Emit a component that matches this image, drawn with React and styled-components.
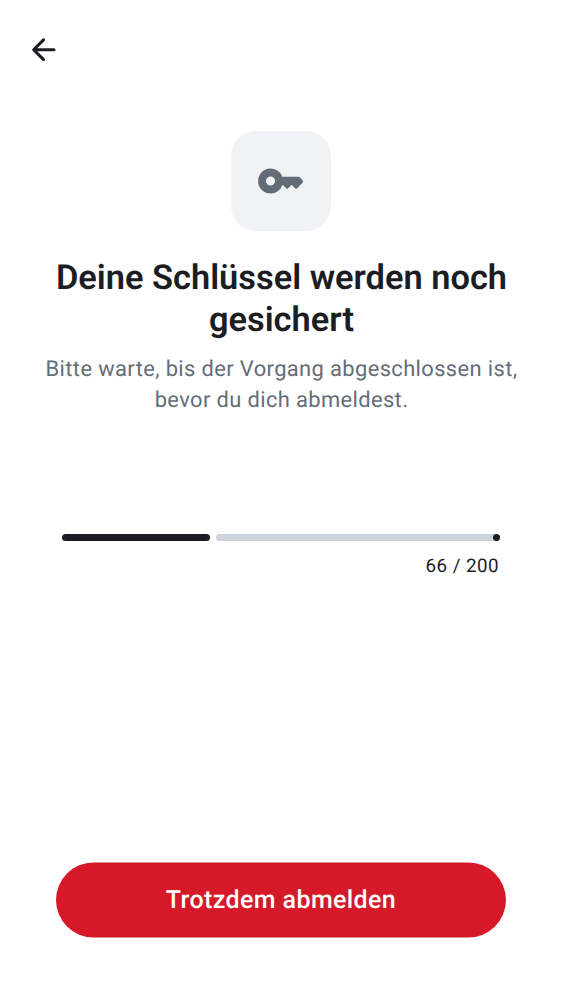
import React from "react";
import styled, { createGlobalStyle } from "styled-components";

const GlobalStyle = createGlobalStyle`
  *, *::before, *::after { box-sizing: border-box; }
  body { margin: 0; background: #fff; font-family: Roboto, sans-serif; color: #1b1d22; text-rendering: geometricPrecision; }
`;
const Screen = styled.div`
  display: flex;
  flex-direction: column;
  width: 562px;
  height: 1000px;
  background: #fff;
`;
const TopBar = styled.header`
  height: 100px;
  display: flex;
  align-items: center;
  padding-left: 25px;
`;
const BackButton = styled.button`
  display: flex;
  border: 0;
  padding: 0;
  background: none;
  color: #1b1d22;
`;
const Header = styled.section`
  display: flex;
  flex-direction: column;
  align-items: center;
  padding-top: 31px;
  text-align: center;
`;
const IconTile = styled.div`
  width: 100px;
  height: 100px;
  border-radius: 25px;
  background: #f0f2f5;
  color: #636b77;
  display: flex;
  align-items: center;
  justify-content: center;
`;
const Title = styled.h1`
  margin: 26px 0 0;
  padding-left: 1px;
  font-size: 34.4px;
  line-height: 42.2px;
  font-weight: 600;
  white-space: nowrap;
`;
const Subtitle = styled.p`
  margin: 12.6px 0 0;
  padding-left: 1px;
  font-size: 21.9px;
  line-height: 31px;
  letter-spacing: 0.38px;
  color: #656d77;
  white-space: nowrap;
`;
const Progress = styled.section`
  padding: 0 62px;
  margin-top: 118px;
`;
const Bar = styled.div`
  display: flex;
  gap: 6px;
  height: 7px;
`;
const Filled = styled.div`
  width: 148px;
  border-radius: 3.5px;
  background: #1b1d22;
`;
const Track = styled.div`
  flex: 1;
  display: flex;
  justify-content: flex-end;
  border-radius: 3.5px;
  background: #cdd3da;
`;
const Stop = styled.span`
  width: 7px;
  height: 7px;
  border-radius: 50%;
  background: #1b1d22;
`;
const Count = styled.div`
  margin-top: 13px;
  padding-right: 1px;
  font-size: 18.75px;
  line-height: 25px;
  letter-spacing: 0.47px;
  text-align: right;
`;
const Footer = styled.footer`
  margin-top: auto;
  padding: 0 56px 63px;
`;
const DangerButton = styled.button`
  display: block;
  width: 100%;
  height: 75px;
  border: 0;
  border-radius: 38px;
  background: #d51928;
  color: #fff;
  font: 500 25px/37px Roboto, sans-serif;
  letter-spacing: 0.39px;
  text-rendering: inherit;
  transform: translateY(0.5px);
`;

export default function App() {
  return (
    <Screen>
      <GlobalStyle />
      <TopBar>
        <BackButton aria-label="Zurück">
          <svg width="36" height="36" viewBox="-0.35 0.2 24 24" fill="currentColor">
            <path d="m7.825 13 4.9 4.9q.3.3.287.7-.012.4-.312.7-.3.275-.7.287-.4.013-.7-.287l-6.6-6.6a.9.9 0 0 1-.213-.325A1.1 1.1 0 0 1 4.425 12q0-.2.062-.375a.9.9 0 0 1 .213-.325l6.6-6.6a.93.93 0 0 1 .688-.275q.412 0 .712.275.3.3.3.713 0 .412-.3.712L7.825 11H19q.424 0 .713.287.287.288.287.713 0 .424-.287.713A.97.97 0 0 1 19 13z" />
          </svg>
        </BackButton>
      </TopBar>
      <Header>
        <IconTile>
          <svg width="50" height="50" viewBox="0 0 24 24" fill="currentColor">
            <path fillRule="evenodd" d="M7 18a6 6 0 1 1 5.65-8h7.75q.42 0 .7.29l1.2 1.2q.7.7 0 1.4l-2.5 2.55q-.55.55-1.1 0L17.1 13.8l-1.65 1.64q-.5.5-1 0L12.9 13.9 12.65 14A6 6 0 0 1 7 18m0-3.8a2.2 2.2 0 1 0 0-4.4 2.2 2.2 0 0 0 0 4.4" />
          </svg>
        </IconTile>
        <Title>Deine Schlüssel werden noch<br />gesichert</Title>
        <Subtitle>Bitte warte, bis der Vorgang abgeschlossen ist,<br />bevor du dich abmeldest.</Subtitle>
      </Header>
      <Progress>
        <Bar><Filled /><Track><Stop /></Track></Bar>
        <Count>66 / 200</Count>
      </Progress>
      <Footer><DangerButton>Trotzdem abmelden</DangerButton></Footer>
    </Screen>
  );
}
